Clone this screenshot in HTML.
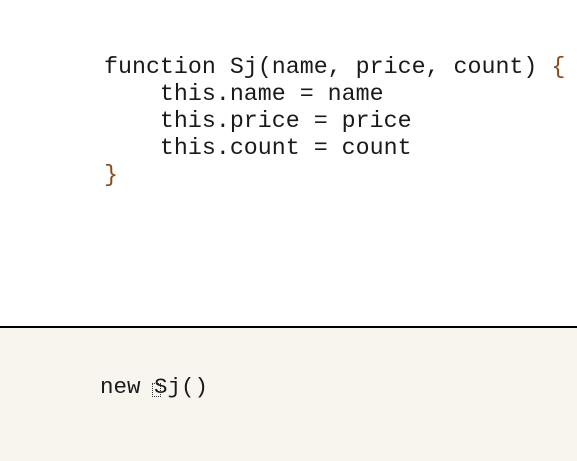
<!DOCTYPE html>
<html><head><style>
body{margin:0;width:577px;height:459px;overflow:hidden;background:#fff;position:relative;font-family:"Liberation Mono",monospace;}
.code{position:absolute;left:104px;top:54px;font-size:23.3px;line-height:27px;color:#1a1a1a;white-space:pre;}
.b{color:#8a4a1a}
.bot{position:absolute;left:0;top:326px;width:577px;height:133px;background:#f8f5ee;border-top:2px solid #000;}
.n{position:absolute;left:100px;top:46px;font-size:22.5px;color:#1a1a1a;white-space:pre;}
.cur{position:absolute;left:52px;top:9px;width:7px;height:12px;border:1px dotted #333;}
</style></head><body>
<div class="code">function Sj(name, price, count) <span class="b">{</span>
    this.name = name
    this.price = price
    this.count = count
<span class="b">}</span></div>
<div class="bot"><div class="n">new Sj()<span class="cur"></span></div></div>
</body></html>
